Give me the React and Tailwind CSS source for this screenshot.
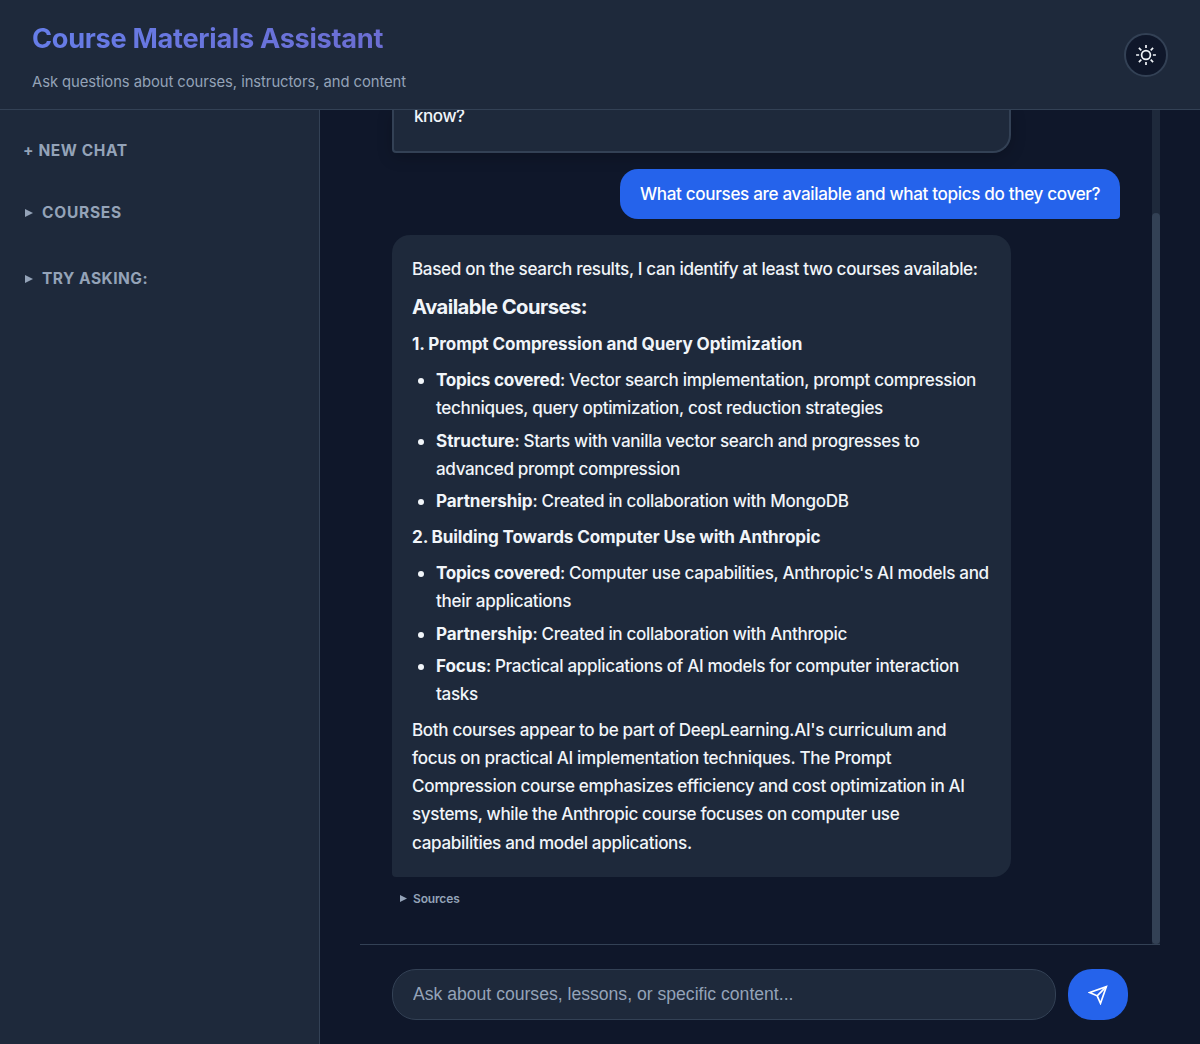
import React from "react";

function SunIcon() {
  return (
    <svg className="size-5" viewBox="0 0 20 20" fill="none" stroke="#f1f5f9" strokeWidth="1.7">
      <circle cx="10" cy="10" r="4.4" />
      <path d="M10 0.1v3M10 16.9v3M0.1 10h3M16.9 10h3M2.9 2.9l2.4 2.4M14.7 14.7l2.4 2.4M2.9 17.1l2.4-2.4M14.7 5.3l2.4-2.4" />
    </svg>
  );
}

function SendIcon() {
  return (
    <svg className="size-5" viewBox="0 0 24 24" fill="none" stroke="white" strokeWidth="2">
      <path d="M22 2L11 13" />
      <path d="M22 2L15 22L11 13L2 9L22 2Z" />
    </svg>
  );
}

function Triangle({ className }) {
  return (
    <svg className={className} viewBox="0 0 8 8" fill="currentColor">
      <path d="M0 0L8 4L0 8Z" />
    </svg>
  );
}

function Header() {
  return (
    <header className="flex h-[110px] shrink-0 items-center justify-between border-b border-[#334155] bg-[#1e293b] px-8">
      <div className="flex flex-1 flex-col pt-px">
        <h1 className="bg-linear-[135deg,#667eea,#764ba2] bg-clip-text text-[27.2px] leading-[44px] font-bold tracking-[-0.3px] text-transparent">
          Course Materials Assistant
        </h1>
        <p className="mt-[9px] text-[14.8px] leading-6 tracking-[-0.06px] text-[#94a3b8]">
          Ask questions about courses, instructors, and content
        </p>
      </div>
      <button className="flex size-11 items-center justify-center rounded-full border-2 border-[#334155] bg-[#0f172a]">
        <SunIcon />
      </button>
    </header>
  );
}

function Sidebar() {
  return (
    <aside className="flex w-80 shrink-0 flex-col border-r border-[#334155] bg-[#1e293b] px-6 pt-7 text-[15.5px] leading-[26px] font-bold tracking-[0.5px] text-[#94a3b8]">
      <button className="-ml-px text-left tracking-[0.6px]">+ NEW CHAT</button>
      <button className="mt-9 flex items-center gap-[9px] text-left tracking-[0.75px]">
        <Triangle className="ml-px h-2 w-2" />
        COURSES
      </button>
      <button className="mt-10 flex items-center gap-[9px] text-left">
        <Triangle className="ml-px h-2 w-2" />
        TRY ASKING:
      </button>
    </aside>
  );
}

function Item({ label, labelClass, children }) {
  return (
    <li>
      <strong className={labelClass}>{label}</strong>
      {children}
    </li>
  );
}

function Answer() {
  return (
    <div className="w-[619px] rounded-[18px] rounded-bl-[4px] bg-[#1e293b] px-5 pt-[20.2px] pb-[19.8px] whitespace-nowrap">
      <p className="tracking-[-0.355px]">
        Based on the search results, I can identify at least two courses available:
      </p>
      <h3 className="mt-[8.6px] mb-[7.4px] text-[20.2px] leading-[30.8px] font-bold tracking-[-0.53px]">Available Courses:</h3>
      <p className="mb-2 font-bold tracking-[-0.095px]">1. Prompt Compression and Query Optimization</p>
      <ul className="mb-2 flex list-disc flex-col gap-1 pl-6">
        <Item label="Topics covered" labelClass="font-bold tracking-[-0.25px]">
          : Vector search implementation, prompt compression
          <br />
          <span className="tracking-[-0.325px]">techniques, query optimization, cost reduction strategies</span>
        </Item>
        <Item label="Structure" labelClass="font-bold tracking-[-0.04px]">
          : Starts with vanilla vector search and progresses to
          <br />
          <span className="tracking-[-0.37px]">advanced prompt compression</span>
        </Item>
        <Item label="Partnership" labelClass="font-bold tracking-[-0.12px]">
          : Created in collaboration with MongoDB
        </Item>
      </ul>
      <p className="mb-2 font-bold tracking-[-0.13px]">2. Building Towards Computer Use with Anthropic</p>
      <ul className="mb-2 flex list-disc flex-col gap-1 pl-6">
        <Item label="Topics covered" labelClass="font-bold tracking-[-0.25px]">
          : Computer use capabilities, Anthropic's AI models and
          <br />
          <span className="tracking-[-0.31px]">their applications</span>
        </Item>
        <Item label="Partnership" labelClass="font-bold tracking-[-0.12px]">
          : Created in collaboration with Anthropic
        </Item>
        <Item label="Focus" labelClass="font-bold tracking-[-0.08px]">
          : Practical applications of AI models for computer interaction
          <br />
          tasks
        </Item>
      </ul>
      <p>
        <span className="tracking-[-0.36px]">Both courses appear to be part of DeepLearning.AI's curriculum and</span>
        <br />
        <span className="tracking-[-0.32px]">focus on practical AI implementation techniques. The Prompt</span>
        <br />
        <span className="tracking-[-0.36px]">Compression course emphasizes efficiency and cost optimization in AI</span>
        <br />
        <span className="tracking-[-0.365px]">systems, while the Anthropic course focuses on computer use</span>
        <br />
        <span className="tracking-[-0.34px]">capabilities and model applications.</span>
      </p>
    </div>
  );
}

function Messages() {
  return (
    <div className="flex min-h-0 flex-1 border-b border-[#334155]">
      <div className="flex flex-1 flex-col items-start gap-4 overflow-hidden px-8 text-[17.1px] leading-[28.16px] font-[450] tracking-[-0.335px] text-[#f1f5f9]">
        <div className="h-[43px] w-[619px] shrink-0 rounded-br-[18px] rounded-bl-[4px] border-2 border-t-0 border-[#334155] bg-[#1e293b] px-5 shadow-[0_4px_16px_rgba(0,0,0,0.2)]">
          <p className="-mt-2 tracking-[-0.5px]">know?</p>
        </div>
        <div className="flex h-[50px] w-[500px] shrink-0 items-center self-end rounded-[18px] rounded-br-[4px] bg-[#2563eb] pl-5 tracking-[-0.34px] whitespace-nowrap text-white">
          What courses are available and what topics do they cover?
        </div>
        <div className="flex flex-col">
          <Answer />
          <button className="mt-3 ml-2 flex items-center gap-1.5 text-[12px] leading-5 font-semibold tracking-[-0.15px] text-[#94a3b8]">
            <Triangle className="h-[7px] w-[7px]" />
            Sources
          </button>
        </div>
      </div>
      <div className="flex w-2 flex-col bg-[#1e293b] pt-[103px]">
        <div className="flex-1 rounded-[4px] bg-[#334155]" />
      </div>
    </div>
  );
}

function Composer() {
  return (
    <form className="flex h-[99px] shrink-0 gap-3 px-8 pt-6 pb-6">
      <input
        className="h-[51px] w-[664px] rounded-[24px] border border-[#334155] bg-[#1e293b] px-5 font-['Liberation_Sans',Arial,sans-serif] text-[17.6px] text-[#f1f5f9] placeholder:text-[#94a3b8]"
        placeholder="Ask about courses, lessons, or specific content..."
      />
      <button type="button" className="flex h-[51px] w-[60px] items-center justify-center rounded-[24px] bg-[#2563eb]">
        <SendIcon />
      </button>
    </form>
  );
}

export default function App() {
  return (
    <div className="flex h-[1044px] w-[1200px] flex-col overflow-hidden bg-[#0f172a] font-['Inter','Liberation_Sans',sans-serif]">
      <Header />
      <div className="flex min-h-0 flex-1">
        <Sidebar />
        <main className="flex flex-1 justify-center">
          <section className="flex w-[800px] flex-col">
            <Messages />
            <Composer />
          </section>
        </main>
      </div>
    </div>
  );
}
